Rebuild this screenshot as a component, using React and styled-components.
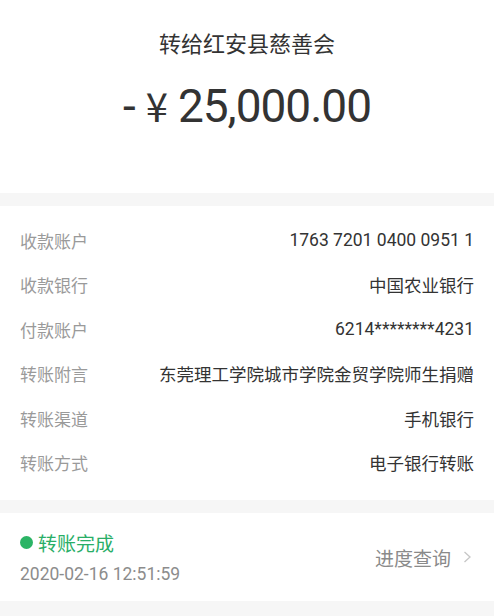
import React from 'react';
import styled, { createGlobalStyle } from 'styled-components';

const GlobalStyle = createGlobalStyle`
  html, body {
    margin: 0;
    padding: 0;
    background: #f6f6f6;
    font-family: Roboto, "Noto Sans CJK SC", sans-serif;
  }
`;

const details = [
  { label: '收款账户', value: '1763 7201 0400 0951 1' },
  { label: '收款银行', value: '中国农业银行' },
  { label: '付款账户', value: '6214********4231' },
  { label: '转账附言', value: '东莞理工学院城市学院金贸学院师生捐赠' },
  { label: '转账渠道', value: '手机银行' },
  { label: '转账方式', value: '电子银行转账' },
];

const App = () => {
  return (
    <Page>
      <GlobalStyle />
      <Header>
        <Title>转给红安县慈善会</Title>
        <Amount>
          <Minus>-</Minus>
          <Yen>¥</Yen>
          <Digits>25,000.00</Digits>
        </Amount>
      </Header>
      <Section $pad="12px 20px 15px">
        {details.map((d) => (
          <Row key={d.label}>
            <Label>{d.label}</Label>
            <Value>{d.value}</Value>
          </Row>
        ))}
      </Section>
      <StatusSection>
        <StatusInfo>
          <StatusLine>
            <Dot />
            转账完成
          </StatusLine>
          <DateText>2020-02-16 12:51:59</DateText>
        </StatusInfo>
        <Progress>
          进度查询
          <svg width="9" height="14" viewBox="0 0 9 14">
            <path d="M1.5 2 L7 7 L1.5 12" fill="none" stroke="#c6c6c6" strokeWidth="1.3" />
          </svg>
        </Progress>
      </StatusSection>
    </Page>
  );
};

export default App;

const Page = styled.div`
  width: 494px;
  height: 616px;
  display: flex;
  flex-direction: column;
  gap: 13px;
  background: #f6f6f6;
  overflow: hidden;
`;

const Header = styled.header`
  background: #fff;
  height: 193px;
  display: flex;
  flex-direction: column;
  align-items: center;
  box-sizing: border-box;
  padding-top: 26px;
`;

const Title = styled.div`
  font-family: "Noto Sans CJK SC", sans-serif;
  font-size: 22px;
  line-height: 32px;
  color: #333;
`;

const Amount = styled.div`
  margin-top: 17px;
  font-family: Roboto, sans-serif;
  font-size: 46px;
  line-height: 60px;
  color: #333;
  display: flex;
  align-items: baseline;
`;

const Digits = styled.span`
  letter-spacing: -1px;
`;

const Minus = styled.span`
  margin-right: 10px;
`;

const Yen = styled.span`
  font-family: "Noto Sans CJK SC", sans-serif;
  font-size: 40px;
  margin-right: 10px;
`;

const Section = styled.section`
  background: #fff;
  padding: ${(props) => props.$pad};
`;

const Row = styled.div`
  height: 44.5px;
  display: flex;
  align-items: center;
  justify-content: space-between;
`;

const Label = styled.span`
  font-family: "Noto Sans CJK SC", sans-serif;
  font-size: 17px;
  color: #9a9a9a;
`;

const Value = styled.span`
  font-family: Roboto, "Noto Sans CJK SC", sans-serif;
  font-size: 17.5px;
  color: #333;
`;

const StatusSection = styled.section`
  background: #fff;
  height: 88px;
  padding: 0 22px 0 20px;
  display: flex;
  align-items: center;
  justify-content: space-between;
`;

const StatusInfo = styled.div`
  display: flex;
  flex-direction: column;
  gap: 5px;
`;

const StatusLine = styled.div`
  display: flex;
  align-items: center;
  gap: 5px;
  font-family: "Noto Sans CJK SC", sans-serif;
  font-size: 19px;
  line-height: 28px;
  color: #2aae67;
`;

const Dot = styled.span`
  width: 13px;
  height: 13px;
  border-radius: 50%;
  background: #2bb465;
`;

const DateText = styled.div`
  font-family: Roboto, sans-serif;
  font-size: 17.5px;
  line-height: 24px;
  color: #8c8c8c;
`;

const Progress = styled.div`
  display: flex;
  align-items: center;
  gap: 12px;
  font-family: "Noto Sans CJK SC", sans-serif;
  font-size: 19px;
  color: #8a8a8a;
`;
